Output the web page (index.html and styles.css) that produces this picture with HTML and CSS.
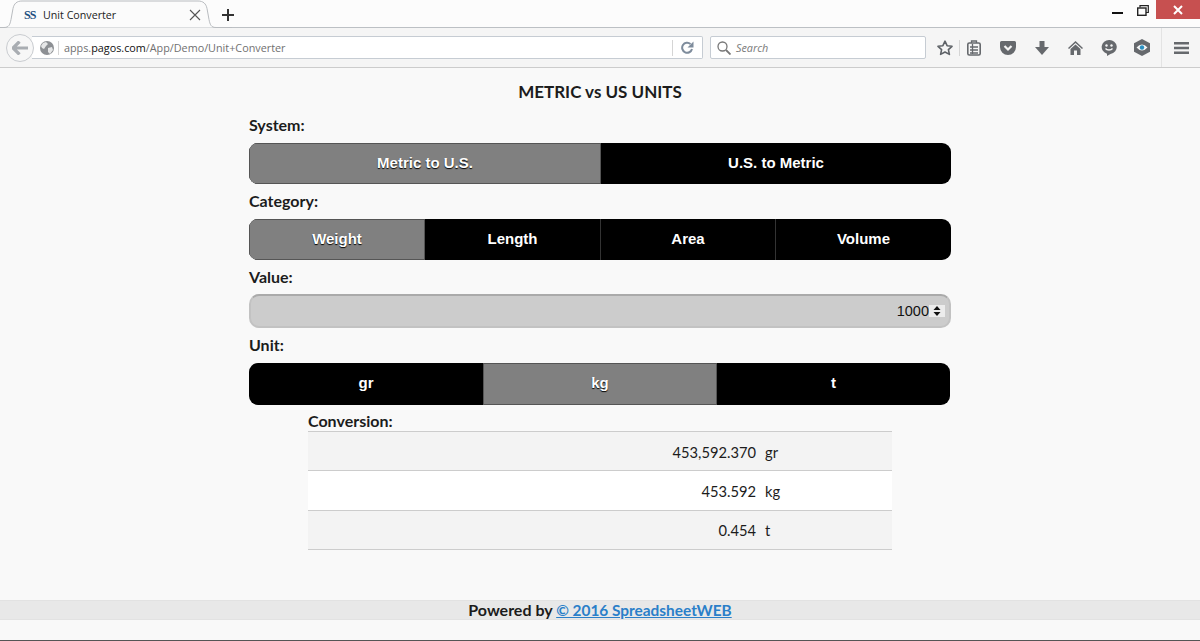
FILE: index.html
```html
<!DOCTYPE html>
<html lang="en">
<head>
    <meta charset="UTF-8">
    <title>Unit Converter</title>
    <link rel="stylesheet" href="styles.css">
</head>
<body>

    <div class="tabbar">
        <div class="tab">
            <svg class="tab-shape" width="232" height="29" viewBox="0 0 232 29"><path d="M0 27.5h4c5 0 6-3 7-8l2-11c1-5 4-7.500 9-7.500h176c5 0 8 2.500 9 7.500l2 11c1 5 2 8 7 8h16" fill="#fbfbfb" stroke="#b9bcc0"/></svg>
            <span class="tab-logo">SS</span>
            <span class="tab-title">Unit Converter</span>
            <svg class="tab-close" width="12" height="12" viewBox="0 0 12 12"><path d="M1 1l10 10M11 1L1 11" stroke="#555" stroke-width="1.100" fill="none"/></svg>
        </div>
        <svg class="tab-new" width="12" height="12" viewBox="0 0 12 12"><path d="M6 0v12M0 6h12" stroke="#333" stroke-width="2" fill="none"/></svg>
        <div class="win-btns">
            <span class="win-min"></span>
            <svg class="win-max" width="12" height="11" viewBox="0 0 12 11"><path d="M3 2.500V.7h8.300v6.800H9" fill="none" stroke="#222" stroke-width="1.200"/><rect x=".7" y="3" width="8.300" height="7.300" fill="none" stroke="#222" stroke-width="1.400"/></svg>
            <span class="win-close"><svg width="10" height="10" viewBox="0 0 10 10"><path d="M1 1l8 8M9 1L1 9" stroke="#fff" stroke-width="2" fill="none"/></svg></span>
        </div>
    </div>

    <div class="toolbar">
        <span class="back"><svg width="16" height="14" viewBox="0 0 16 14"><path d="M7.500 0.500L1 7l6.500 6.500M1.500 7H16" stroke="#a9adb2" stroke-width="3.200" fill="none"/></svg></span>
        <div class="urlbar">
            <svg class="globe" width="14" height="14" viewBox="0 0 14 14"><circle cx="7" cy="7" r="7" fill="#8d9094"/><path d="M3 2l3-1 2 2-2 2-2 3-2-1-1-2zM8 7l4-1 1 3-3 4-2-2z" fill="#e6e7e8"/></svg>
            <span class="url">apps.<b>pagos.com</b>/App/Demo/Unit+Converter</span>
            <span class="url-sep"></span>
            <svg class="reload" width="13" height="13" viewBox="0 0 13 13"><path d="M11 8a5 5 0 1 1-1.500-5" fill="none" stroke="#7e8c9c" stroke-width="2"/><path d="M12.500 0.500v6h-6z" fill="#7e8c9c"/></svg>
        </div>
        <div class="searchbar">
            <svg width="14" height="14" viewBox="0 0 14 14"><circle cx="5.500" cy="5.500" r="4.500" fill="none" stroke="#777" stroke-width="1.300"/><path d="M9 9l4.500 4.500" stroke="#777" stroke-width="1.800"/></svg>
            <span>Search</span>
        </div>
        <div class="tools">
            <svg class="t-star" width="16" height="16" viewBox="0 0 16 16"><path d="M8 1.200l2.100 4.500 4.900.6-3.600 3.300 1 4.800L8 12l-4.400 2.400 1-4.800L1 6.300l4.900-.6z" fill="none" stroke="#5f6368" stroke-width="1.600" stroke-linejoin="round"/></svg>
            <span class="t-sep"></span>
            <svg class="t-list" width="14" height="16" viewBox="0 0 14 16"><rect x=".8" y="3" width="12.400" height="12" rx="1.500" fill="none" stroke="#66696d" stroke-width="1.600"/><path d="M4.500 3V1h5v2M3 7h8M3 10h8M3 13h8M5.500 4v10" stroke="#66696d" stroke-width="1.300" fill="none"/></svg>
            <svg class="t-pocket" width="16" height="14" viewBox="0 0 16 14"><path d="M1.500 0h13A1.500 1.500 0 0 1 16 1.500V6A8 8 0 0 1 0 6V1.500A1.500 1.500 0 0 1 1.500 0z" fill="#66696d"/><path d="M4.500 5L8 8.500 11.500 5" fill="none" stroke="#f5f5f5" stroke-width="2.200"/></svg>
            <svg class="t-down" width="14" height="14" viewBox="0 0 14 14"><path d="M4.500 0h5v6H14L7 14 0 6h4.500z" fill="#66696d"/></svg>
            <svg class="t-home" width="15" height="14" viewBox="0 0 15 14"><path d="M7.500 0L15 7l-1 1-6.500-6L1 8 0 7z" fill="#66696d"/><path d="M2.500 8l5-4.500 5 4.500v6H9V9.500H6V14H2.500z" fill="#66696d"/></svg>
            <svg class="t-chat" width="16" height="16" viewBox="0 0 16 16"><path d="M8 0a7.500 7 0 0 1 1.500 13.900L6 16v-2.300A7.500 7 0 0 1 8 0z" fill="#66696d"/><circle cx="5.500" cy="5.500" r="1.200" fill="#f5f5f5"/><circle cx="10.500" cy="5.500" r="1.200" fill="#f5f5f5"/><path d="M4.500 8.500c1.500 2 5.500 2 7 0" fill="none" stroke="#f5f5f5" stroke-width="1.300"/></svg>
            <svg class="t-eye" width="16" height="17" viewBox="0 0 16 17"><path d="M8 0l8 4.300v8.400L8 17l-8-4.300V4.300z" fill="#66696d"/><path d="M2.500 8.500Q8 2.500 13.500 8.500 8 14.500 2.500 8.500z" fill="#f5f5f5"/><circle cx="8" cy="8.500" r="2.200" fill="#2a8fc0"/></svg>
            <span class="t-sep t-sep-tall"></span>
            <svg class="t-menu" width="15" height="12" viewBox="0 0 15 12"><path d="M0 1.250h15M0 6h15M0 10.750h15" stroke="#66696d" stroke-width="2.400"/></svg>
        </div>
    </div>

    <div class="page">
        <div class="converter">
            <h1>METRIC vs US UNITS</h1>

            <div class="label">System:</div>
            <div class="seg seg-system">
                <div class="seg-item on">Metric to U.S.</div>
                <div class="seg-item">U.S. to Metric</div>
            </div>

            <div class="label">Category:</div>
            <div class="seg seg-category">
                <div class="seg-item on">Weight</div>
                <div class="seg-item">Length</div>
                <div class="seg-item">Area</div>
                <div class="seg-item">Volume</div>
            </div>

            <div class="label">Value:</div>
            <div class="value">
                <span>1000</span>
                <span class="spin"><svg width="8" height="10" viewBox="0 0 8 10"><path d="M4 0l3.500 4h-7zM4 10L.5 6h7z" fill="#111"/></svg></span>
            </div>

            <div class="label">Unit:</div>
            <div class="seg seg-unit">
                <div class="seg-item">gr</div>
                <div class="seg-item on">kg</div>
                <div class="seg-item">t</div>
            </div>

            <div class="result">
                <div class="label label-result">Conversion:</div>
                <div class="row"><span class="num">453,592.370</span><span class="unit">gr</span></div>
                <div class="row row-white"><span class="num">453.592</span><span class="unit">kg</span></div>
                <div class="row row-last"><span class="num">0.454</span><span class="unit">t</span></div>
            </div>
        </div>

        <div class="footer">Powered by <a href="#">© 2016 SpreadsheetWEB</a></div>
    </div>

</body>
</html>
```

FILE: styles.css
```css
html, body { margin: 0; padding: 0; }
body { width: 1200px; height: 641px; overflow: hidden; background-color: #f9f9f9; font-family: "Lato", "Liberation Sans", sans-serif; color: #1c1c1c; border-bottom: 1px solid #555; box-sizing: border-box; }

/* browser chrome */
.tabbar { display: flex; align-items: center; height: 28px; background-color: #fcfcfc; border-bottom: 1px solid #bcc0c4; box-sizing: border-box; }
.tab { position: relative; display: flex; align-items: center; width: 215px; height: 27px; padding-top: 3px; box-sizing: border-box; }
.tab-shape { position: absolute; left: 0; top: 0; }
.tab-logo { position: relative; margin-left: 24px; width: 19px; font-family: "Liberation Serif", serif; font-weight: bold; font-size: 12px; letter-spacing: -1px; color: #1d4f80; }
.tab-title { position: relative; color: #222; font-family: "Open Sans", sans-serif; font-size: 10.700px; }
.tab-close { position: relative; margin-left: auto; margin-right: 14px; }
.tab-new { margin-left: 7px; margin-top: 3px; }
.win-btns { display: flex; align-items: flex-start; margin-left: auto; height: 27px; align-self: flex-start; }
.win-min { width: 11px; height: 2px; background-color: #111; margin-top: 12px; margin-right: 14px; }
.win-max { margin-top: 5px; margin-right: 7px; }
.win-close { display: flex; align-items: center; justify-content: center; width: 44px; height: 19px; background-color: #c75050; }

.toolbar { display: flex; align-items: center; height: 40px; background-color: #f5f5f5; border-bottom: 1px solid #ccc; box-sizing: border-box; padding-left: 6px; }
.back { position: relative; z-index: 1; display: flex; align-items: center; justify-content: center; width: 28px; height: 28px; box-sizing: border-box; border: 1px solid #c9ccd0; border-radius: 50%; background-color: #f7f7f7; }
.urlbar { display: flex; align-items: center; width: 671px; height: 23px; margin-left: -2px; box-sizing: border-box; background-color: #fff; border: 1px solid #c6ccd3; border-left: none; border-radius: 0 2px 2px 0; font-family: "Open Sans", sans-serif; font-size: 10.800px; color: #707070; }
.globe { margin-left: 8px; }
.url { margin-left: 4px; padding-left: 5px; border-left: 1px solid #d5d5d5; line-height: 14px; flex: 1; }
.url b { font-weight: normal; color: #111; }
.url-sep { width: 1px; height: 16px; background-color: #d5d5d5; }
.reload { margin: 0 8px 0 8px; }
.searchbar { display: flex; align-items: center; gap: 5px; width: 216px; height: 23px; margin-left: 7px; padding-left: 6px; box-sizing: border-box; background-color: #fff; border: 1px solid #c6ccd3; border-radius: 2px; font-family: "Open Sans", sans-serif; font-style: italic; font-size: 10.800px; color: #7a7a7a; }
.tools { display: flex; align-items: center; margin-left: 11px; }
.t-sep { width: 1px; height: 16px; background-color: #d5d5d5; margin-left: 6px; margin-right: 7px; }
.t-sep-tall { height: 39px; margin-left: 11px; margin-right: 12px; background-color: #e3e3e3; }
.t-pocket { margin-left: 19px; }
.t-down { margin-left: 19px; }
.t-home { margin-left: 19px; }
.t-chat { margin-left: 18px; }
.t-eye { margin-left: 17px; }

/* page */
.page { height: 572px; display: flex; flex-direction: column; }
.converter { width: 702px; margin: 0 auto; flex: 1; }
h1 { margin: 12px 0 0; height: 22px; line-height: 24px; text-align: center; font-size: 17px; font-weight: bold; color: #1c1c1c; }
.label { height: 18px; line-height: 20px; font-size: 16px; font-weight: bold; }
h1 + .label { margin-top: 13px; }

.seg { display: grid; height: 41px; margin: 10px 0 7px; border-radius: 9px; overflow: hidden; background-color: #000; font-family: "Liberation Sans", sans-serif; font-size: 15px; font-weight: bold; color: #fff; }
.seg-system { grid-template-columns: 352px 350px; }
.seg-category { grid-template-columns: 176px 175px 175px 176px; }
.seg-unit { grid-template-columns: 234px 234px 233px; width: 701px; height: 42px; }
.seg-item { display: flex; align-items: center; justify-content: center; padding-bottom: 3px; box-sizing: border-box; border-left: 1px solid #333; }
.seg-item:first-child { border-left: none; }
.seg-item.on { background-color: #808080; box-shadow: inset 0 0 0 1px #555; border-left: none; text-shadow: 0 1px 1px #000; }
.seg-item.on + .seg-item { border-left: none; }

.value { display: flex; align-items: center; justify-content: flex-end; height: 34px; margin: 9px 0 7px; padding-right: 4px; box-sizing: border-box; border: 2px solid #c2c2c2; border-top-color: #aaa; border-radius: 10px; background-color: #ccc; font-family: "Liberation Sans", sans-serif; font-size: 14.500px; color: #111; }
.spin { display: flex; align-items: center; justify-content: center; width: 16px; height: 12px; background-color: #ececec; }

.result { width: 584px; margin: -1px 0 0 59px; }
.label-result { height: 20px; }
.row { display: flex; height: 39px; padding-top: 1px; box-sizing: border-box; align-items: center; background-color: #f3f3f3; border-top: 1px solid #ccc; font-size: 14.700px; }
.row-white { background-color: #fff; height: 40px; }
.row-last { border-bottom: 1px solid #ccc; height: 40px; padding-top: 0; }
.num { width: 448px; text-align: right; }
.unit { margin-left: 9px; }

.footer { height: 20px; margin-bottom: 20px; line-height: 17px; background-color: #e8e8e8; border-top: 1px solid #e2e2e2; border-bottom: 1px solid #e2e2e2; box-sizing: border-box; text-align: center; font-size: 16px; font-weight: bold; }
.footer a { color: #2a7fc9; font-size: 15.400px; }
```
